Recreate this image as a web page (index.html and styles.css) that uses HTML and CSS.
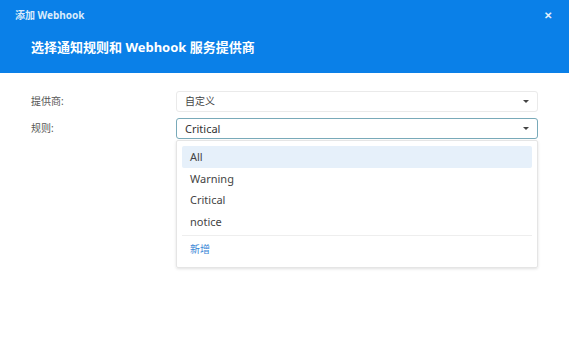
FILE: index.html
```html
<html><head>
<title>添加 Webhook</title>
<link rel="stylesheet" href="styles.css">
</head>
<body>
<div class="dlg">
	<div class="hd">
		<div class="hd-top">
			<span class="hd-title">添加 Webhook</span>
			<span class="hd-close">&#x2715;</span>
		</div>
		<h1>选择通知规则和 Webhook 服务提供商</h1>
	</div>
	<div class="bd">
		<div class="row">
			<label>提供商:</label>
			<div class="sel">自定义<i class="caret"></i></div>
		</div>
		<div class="row">
			<label>规则:</label>
			<div class="field">
				<div class="sel active">Critical<i class="caret"></i></div>
				<ul class="menu">
					<li class="on">All</li>
					<li>Warning</li>
					<li>Critical</li>
					<li>notice</li>
					<li class="add">新增</li>
				</ul>
			</div>
		</div>
	</div>
</div>
</body></html>
```

FILE: styles.css
```css
body{margin:0;background:#fff;font-family:"Noto Sans","Noto Sans CJK SC",sans-serif;color:#333;}
.hd{background:#0a80e8;color:#fff;height:73px;padding:0 15px 0 15px;box-sizing:border-box;}
.hd-top{display:flex;justify-content:space-between;align-items:center;height:29px;}
.hd-title{font-size:10px;font-weight:bold;color:#d9ebfb;}
.hd-close{font-size:10px;font-weight:bold;color:#e3f0fc;margin-right:2px;}
h1{margin:0;padding:8px 0 0 16px;font-size:13px;font-weight:bold;line-height:20px;}
.bd{padding:18px 31px 0 31px;}
.row{display:flex;align-items:flex-start;margin-bottom:6px;}
label{width:145px;font-size:10px;color:#555;line-height:21px;}
.field{flex:1;}
.sel{flex:1;position:relative;height:21px;box-sizing:border-box;border:1px solid #eaeaea;border-radius:3px;font-size:10px;line-height:19px;padding-left:8px;color:#444;}
.sel.active{border-color:#79aab9;font-size:11px;color:#333;}
.caret{position:absolute;right:8px;top:8px;width:0;height:0;border-left:3px solid transparent;border-right:3px solid transparent;border-top:3px solid #444;}
.menu{list-style:none;margin:1px 0 0 0;padding:5px 5px 6px 5px;border:1px solid #e5e5e5;border-radius:2px;box-shadow:0 1px 3px rgba(0,0,0,0.12);}
.menu li{font-size:11px;line-height:21.5px;padding-left:8px;color:#444;}
.menu li.on{background:#e6f0fa;border-radius:2px;}
.menu li.add{border-top:1px solid #eee;margin-top:3px;padding-top:3px;color:#3a86d6;font-size:10px;}
```
